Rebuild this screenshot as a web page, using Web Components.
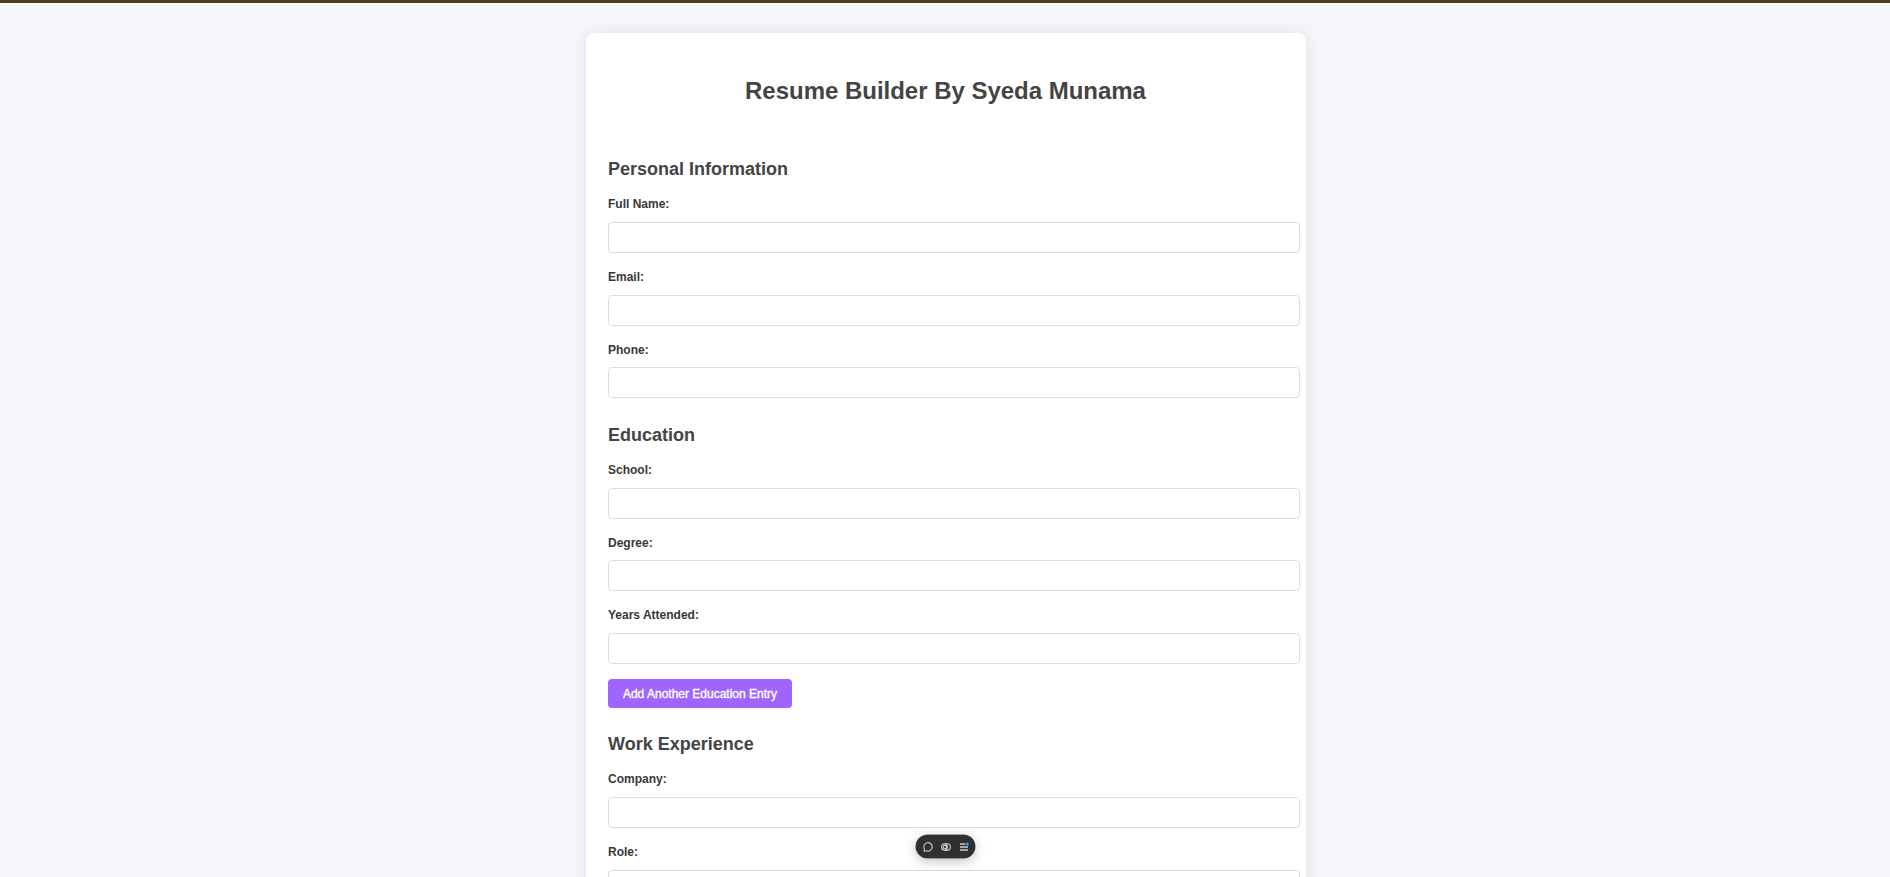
<!DOCTYPE html>
<html lang="en">
<head>
<meta charset="utf-8">
<title>Resume Builder</title>
<style>
html,body{margin:0;height:100%;overflow:hidden;background:#f5f7fb;font-family:"Liberation Sans",Arial,sans-serif}
</style>
</head>
<body>
<resume-app></resume-app>
<script>
const define = (name, html) => customElements.define(name, class extends HTMLElement {
  constructor() {
    super();
    const t = document.createElement('template');
    t.innerHTML = html;
    this.attachShadow({mode: 'open'}).append(t.content.cloneNode(true));
  }
});

define('form-field', `<style>
:host{display:block;height:72.75px}
label{display:block;height:14px;line-height:14px;padding-top:1.26px;margin-bottom:10.8px;font-size:12px;font-weight:700;color:#383838}
input{display:block;box-sizing:border-box;width:calc(100% + 16px);height:31px;border:1px solid #ddd;border-radius:4px;padding:7px;background:#fff;outline:0;font:12px "Liberation Sans",sans-serif}
</style><label><slot></slot></label><input type="text">`);

define('form-section', `<style>
:host{display:block;margin-bottom:10.64px}
h2{margin:0 0 17px;font-size:18px;line-height:20px;font-weight:700;color:#444}
</style><h2><slot name="title"></slot></h2><slot></slot>`);

define('add-button', `<style>
:host{display:block;height:44.16px;margin-top:-.7px}
button{display:block;width:184px;height:29px;padding:0;border:0;border-radius:4px;background:#9f66ff;color:#fff;font:12px "Liberation Sans",sans-serif;-webkit-text-stroke:.35px #fff;white-space:nowrap}
</style><button><slot></slot></button>`);

define('float-toolbar', `<style>
:host{position:fixed;left:916px;top:835px;width:59px;height:23px;box-sizing:border-box;padding:0 5.5px;display:flex;align-items:center;justify-content:space-between;border-radius:12px;background:#303030;box-shadow:0 0 0 .5px #555,0 3px 12px rgba(0,0,0,.25)}
svg{display:block;width:12px;height:12px;fill:none;stroke:#ccc;stroke-width:1.1}
</style>
<svg viewBox="0 0 12 12"><path d="M2 10.2 2.4 8A4.2 4.2 0 1 1 4.3 9.7Z" stroke-linejoin="round"/></svg>
<svg viewBox="0 0 12 12"><rect x="1.6" y="2.8" width="8.8" height="6.6" rx="3.3"/><circle cx="4.9" cy="6.1" r="1.7"/><path d="M4.9 2.9A3.3 3.3 0 0 1 4.9 9.3"/></svg>
<svg viewBox="0 0 12 12"><path d="M2 3h5.2M2 6h8M2 9h8" stroke-width="1.3"/><circle cx="9.2" cy="3" r="1.6" fill="#3b9cff" stroke="none"/></svg>`);

define('resume-app', `<style>
:host{display:block;height:877px;overflow:hidden;border-top:3px solid #4b3d21;box-sizing:border-box}
main{width:720px;height:900px;margin:30px auto 0;box-sizing:border-box;padding:43.76px 22px 0;border-radius:8px;background:#fff;box-shadow:0 0 15px rgba(0,0,0,.1);position:relative;left:1px}
h1{margin:0 0 54px;padding-right:1px;font-size:24px;line-height:28px;font-weight:700;color:#444;text-align:center;letter-spacing:-.02px}
</style>
<main><h1>Resume Builder By Syeda Munama</h1>
<form-section><span slot="title">Personal Information</span>
<form-field>Full Name:</form-field><form-field>Email:</form-field><form-field>Phone:</form-field></form-section>
<form-section><span slot="title">Education</span>
<form-field>School:</form-field><form-field>Degree:</form-field><form-field>Years Attended:</form-field>
<add-button>Add Another Education Entry</add-button></form-section>
<form-section><span slot="title">Work Experience</span>
<form-field>Company:</form-field><form-field>Role:</form-field></form-section></main>
<float-toolbar></float-toolbar>`);
</script>
</body>
</html>
